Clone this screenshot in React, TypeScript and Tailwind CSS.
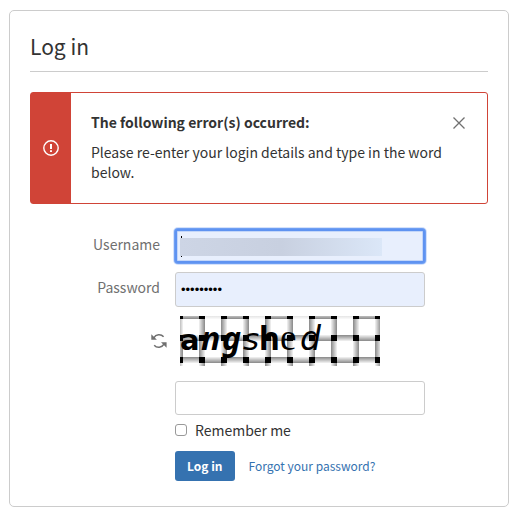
import { useState } from 'react';

const columns = [0, 22, 44, 66, 88, 110, 132, 154, 176, 198];

const letters = [
  { char: 'a', x: 0, size: 29, family: 'DejaVu Sans', weight: 700, style: 'normal' },
  { char: 'n', x: 21, size: 32, family: 'Noto Sans', weight: 700, style: 'italic' },
  { char: 'g', x: 42, size: 32, family: 'Noto Sans', weight: 700, style: 'italic' },
  { char: 's', x: 63, size: 31, family: 'DejaVu Sans', weight: 400, style: 'italic' },
  { char: 'h', x: 79, size: 32, family: 'Noto Sans', weight: 700, style: 'normal' },
  { char: 'e', x: 100, size: 37, family: 'Liberation Serif', weight: 400, style: 'normal' },
  { char: 'd', x: 120, size: 33, family: 'DejaVu Sans', weight: 400, style: 'italic' },
];

function Captcha() {
  return (
    <svg width="200" height="50" viewBox="0 0 200 50" role="img" aria-label="Verification word" className="block">
      <defs>
        <linearGradient id="right">
          <stop offset="0" stopColor="#888" />
          <stop offset="1" stopColor="#f4f4f4" />
        </linearGradient>
        <linearGradient id="left">
          <stop offset="0" stopColor="#f4f4f4" />
          <stop offset="1" stopColor="#888" />
        </linearGradient>
        <linearGradient id="down" x2="0" y2="1">
          <stop offset="0" stopColor="#888" />
          <stop offset="1" stopColor="#f4f4f4" />
        </linearGradient>
        <linearGradient id="up" x2="0" y2="1">
          <stop offset="0" stopColor="#f4f4f4" />
          <stop offset="1" stopColor="#888" />
        </linearGradient>
      </defs>
      <rect width="200" height="50" fill="#fff" />
      {columns.map((x, i) => (
        <g key={x}>
          <rect x={x} y="-3" width="22" height="6" fill={i % 2 ? 'url(#down)' : 'url(#up)'} opacity={i % 2 ? 0.4 : 1} />
          <rect x={x} y="19" width="22" height="6" fill={i % 2 ? 'url(#down)' : 'url(#up)'} />
          <rect x={x} y="41" width="22" height="6" fill={i % 2 ? 'url(#up)' : 'url(#down)'} />
          <rect x={x - 3} y="0" width="6" height="22" fill={i % 2 ? 'url(#left)' : 'url(#right)'} />
          <rect x={x - 3} y="22" width="6" height="22" fill={i % 2 ? 'url(#right)' : 'url(#left)'} />
          <rect x={x - 3} y="44" width="6" height="6" fill={i % 2 ? 'url(#left)' : 'url(#right)'} />
        </g>
      ))}
      {columns.map((x) => (
        <g key={x} fill="#000">
          <rect x={x - 3} y="0" width="6" height="3" />
          <rect x={x - 3} y="19" width="6" height="6" />
          <rect x={x - 3} y="41" width="6" height="6" />
        </g>
      ))}
      {letters.map((l) => (
        <text key={l.char} x={l.x} y="34" fontSize={l.size} fontFamily={l.family} fontWeight={l.weight} fontStyle={l.style}>
          {l.char}
        </text>
      ))}
    </svg>
  );
}

export default function App() {
  const [showError, setShowError] = useState(true);
  const [username, setUsername] = useState('');
  const [password, setPassword] = useState('passwords');
  const [word, setWord] = useState('');
  const [remember, setRemember] = useState(false);

  return (
    <main className="bg-white pt-[10px] pr-3 pb-3 pl-[9px] font-['Noto_Sans_CJK_SC',sans-serif] text-sm text-[#333]">
      <div className="rounded-[5px] border border-[#ccc] px-5 pt-[19px] pb-[25px]">
        <h1 className="border-b border-[#ccc] pb-[9px] text-[21px] leading-8">Log in</h1>

        {showError && (
          <div role="alert" className="mt-5 flex rounded-[3px] border border-[#d04437]">
            <div className="flex w-10 shrink-0 items-center justify-center bg-[#d04437] text-white">
              <svg width="16" height="16" viewBox="0 0 16 16" fill="none" stroke="currentColor">
                <circle cx="8" cy="8" r="7.2" strokeWidth="1.4" />
                <path d="M8 4v5M8 10.3v1.8" strokeWidth="2" />
              </svg>
            </div>
            <div className="flex-1 pt-[19px] pb-[21px] pl-5 leading-5">
              <p className="font-bold">The following error(s) occurred:</p>
              <p className="mt-[10px]">Please re-enter your login details and type in the word below.</p>
            </div>
            <button type="button" aria-label="Close" onClick={() => setShowError(false)} className="mt-6 mr-[22px] h-3 w-3 text-[#707070]">
              <svg width="12" height="12" viewBox="0 0 12 12" stroke="currentColor" strokeWidth="1.3">
                <path d="M.5.5l11 11M11.5.5l-11 11" />
              </svg>
            </button>
          </div>
        )}

        <form className="mt-[25px]" onSubmit={(e) => e.preventDefault()}>
          <div className="flex gap-[15px]">
            <label htmlFor="username" className="w-[130px] pt-[5px] text-right leading-5 text-[#707070]">Username</label>
            <div className="relative max-w-[250px] flex-1">
              <input
                id="username"
                type="text"
                value={username}
                onChange={(e) => setUsername(e.target.value)}
                className="block h-[34px] w-full rounded-[3px] border-2 border-[#5f93f1] bg-[#e8effd] px-1 shadow-[0_0_0_1px_#6f9ff3,0_0_0_2px_#d5e2fb,inset_0_0_0_1px_#c3d6f9] outline-none"
              />
              {/* caret, mostly hidden by the masked name */}
              <span className="absolute top-[7px] left-[6px] h-[21px] w-px bg-black" />
              <span className="absolute top-[9px] left-[5px] h-[18px] w-[202px] bg-linear-to-r from-[#cdd5e5] via-[#c8d0e0] to-[#dbe7f8]" />
            </div>
          </div>
          <div className="mt-[9px] flex gap-[15px]">
            <label htmlFor="password" className="w-[130px] pt-[5px] text-right leading-5 text-[#707070]">Password</label>
            <input
              id="password"
              type="password"
              value={password}
              onChange={(e) => setPassword(e.target.value)}
              className="block h-[35px] max-w-[250px] flex-1 rounded-[3px] border border-[#ccc] bg-[#e8effd] px-[5px] font-['Liberation_Sans',sans-serif] text-[13px] text-black"
            />
          </div>
          <div className="mt-[9px] flex items-center">
            <div className="flex w-[150px] justify-end pr-[13px]">
              <button type="button" aria-label="New word" className="text-[#707070]">
                <svg width="16" height="16" viewBox="0 0 16 16" fill="none" stroke="currentColor" strokeWidth="1.5">
                  <path d="M2.8 4.8A6 6 0 0 1 12.6 3.8M13 11.2A6 6 0 0 1 3.2 12.2" />
                  <path d="M.3 1.2v5.6h5.6zM15.6 14.8V9.2h-5.6z" fill="currentColor" stroke="none" />
                </svg>
              </button>
            </div>
            <Captcha />
          </div>
          <div className="mt-[15px] ml-[145px]">
            <input
              type="text"
              aria-label="Verification word"
              value={word}
              onChange={(e) => setWord(e.target.value)}
              className="block h-[34px] w-full max-w-[250px] rounded-[3px] border border-[#ccc] px-[5px]"
            />
            <div className="mt-[5px] flex items-center gap-2">
              <input
                id="remember"
                type="checkbox"
                checked={remember}
                onChange={(e) => setRemember(e.target.checked)}
                className="h-3 w-3 appearance-none rounded-[3px] border border-[#999] bg-white checked:bg-[#3572b0]"
              />
              <label htmlFor="remember" className="leading-5">Remember me</label>
            </div>
            <div className="mt-[11px] flex items-center gap-[14px] text-xs">
              <button type="submit" className="h-[30px] rounded-[3px] bg-[#3572b0] px-3 font-bold text-white">Log in</button>
              <a href="#forgot" className="text-[#3572b0]">Forgot your password?</a>
            </div>
          </div>
        </form>
      </div>
    </main>
  );
}
